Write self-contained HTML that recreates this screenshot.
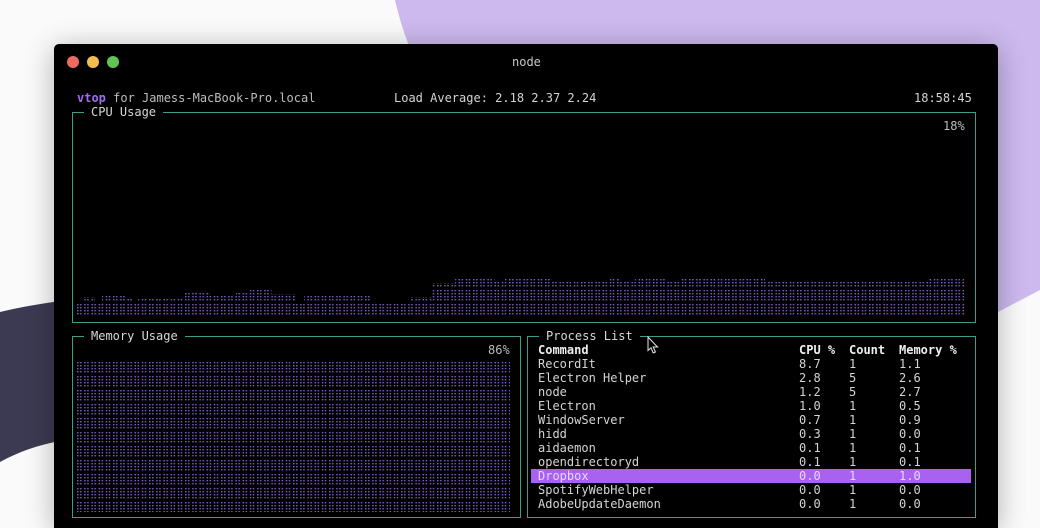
<!DOCTYPE html>
<html><head><meta charset="utf-8"><title>vtop</title>
<style>
html,body{margin:0;padding:0;width:1040px;height:528px;overflow:hidden}
body{position:relative;background:#fafafa;font:12px/14px "DejaVu Sans Mono","Liberation Mono",monospace;color:#d4d4d4}
svg.bg{position:absolute;left:0;top:0}
.clip{position:absolute;left:0;top:0;width:1040px;height:528px;overflow:hidden}
.win{position:absolute;left:54px;top:44px;width:944px;height:484px;background:#000;border-radius:5px 5px 0 0;box-shadow:0 4px 28px rgba(0,0,0,.3)}
.dot{position:absolute;top:56px;width:12px;height:12px;border-radius:50%}
.t{position:absolute;white-space:pre;height:14px;filter:blur(.3px)}
.box{position:absolute;border:1px solid #3f9c8b;box-sizing:border-box}
.lbl{position:absolute;background:#000;white-space:pre;height:14px;padding:0 7px;color:#d8d8d8}
.b{font-weight:bold;color:#eee}
.hl{position:absolute;left:531px;top:469px;width:440px;height:14px;background:#a961ef}
svg.g{position:absolute;left:0;top:0}
</style></head><body>
<div class="clip">
<svg class="bg" width="1040" height="528">
<path d="M395 0C402 30 412 60 440 110L1040 290V0Z" fill="#cdb9ee"/>
<path d="M440 110L600 340L998 312L1040 290V200Z" fill="#cdb9ee"/>
<path d="M0 312C20 307 40 304 60 301V441C38 445 18 452 0 462Z" fill="#3c3a52"/>
</svg>
<div class="win"></div>
<div class="dot" style="left:67px;background:#ee6a5f"></div>
<div class="dot" style="left:87px;background:#f5bd4f"></div>
<div class="dot" style="left:107px;background:#61c454"></div>
<div class="t" style="left:512px;top:55px;color:#c8c8c8">node</div>

<div class="t" style="left:77px;top:91px;color:#bdbdbd"><b style="color:#a56bef">vtop</b> for Jamess-MacBook-Pro.local</div>
<div class="t" style="left:394px;top:91px">Load Average: 2.18 2.37 2.24</div>
<div class="t" style="left:914px;top:91px">18:58:45</div>

<div class="box" style="left:72px;top:112px;width:904px;height:211px"></div>
<div class="lbl" style="left:84px;top:105px">CPU Usage</div>
<div class="t" style="left:943px;top:119px;color:#bbb">18%</div>

<div class="box" style="left:72px;top:336px;width:449px;height:182px"></div>
<div class="lbl" style="left:84px;top:329px">Memory Usage</div>
<div class="t" style="left:488px;top:343px;color:#bbb">86%</div>

<div class="box" style="left:527px;top:336px;width:449px;height:182px"></div>
<div class="lbl" style="left:539px;top:329px">Process List</div>

<svg class="g" width="1040" height="528">
<defs>
<pattern id="c" patternUnits="userSpaceOnUse" x="77" y="304" width="7.2" height="14">
<g fill="#7c5cc4"><rect x="0" y="0" width="1.5" height="1.4"/><rect x="3" y="0" width="1.5" height="1.4"/><rect x="0" y="3" width="1.5" height="1.4"/><rect x="3" y="3" width="1.5" height="1.4"/><rect x="0" y="6" width="1.5" height="1.4"/><rect x="3" y="6" width="1.5" height="1.4"/><rect x="0" y="9" width="1.5" height="1.4"/><rect x="3" y="9" width="1.5" height="1.4"/></g>
</pattern>
<pattern id="m" patternUnits="userSpaceOnUse" x="77" y="362" width="7.2" height="14">
<g fill="#7c5cc4"><rect x="0" y="0" width="1.5" height="1.4"/><rect x="3" y="0" width="1.5" height="1.4"/><rect x="0" y="3" width="1.5" height="1.4"/><rect x="3" y="3" width="1.5" height="1.4"/><rect x="0" y="6" width="1.5" height="1.4"/><rect x="3" y="6" width="1.5" height="1.4"/><rect x="0" y="9" width="1.5" height="1.4"/><rect x="3" y="9" width="1.5" height="1.4"/></g>
</pattern>
</defs>
<path fill="url(#c)" d="M77 317V303H84V297H95V303H102V296H127V299H134V303H138V298H183V293H210V296H236V293H250V290H272V294H296V303H304V296H370V303H410V297H432V283H455V278H495V282H505V278H550V282H610V278H620V282H635V278H665V282H680V278H765V282H928V278H965V317Z"/>
<rect x="77" y="362" width="433" height="150" fill="url(#m)"/>
</svg>

<div class="hl"></div>
<div class="t b" style="left:538px;top:343px">Command</div><div class="t b" style="left:799px;top:343px">CPU %</div><div class="t b" style="left:849px;top:343px">Count</div><div class="t b" style="left:899px;top:343px">Memory %</div>
<div class="t" style="left:538px;top:357px">RecordIt</div><div class="t" style="left:799px;top:357px">8.7</div><div class="t" style="left:849px;top:357px">1</div><div class="t" style="left:899px;top:357px">1.1</div>
<div class="t" style="left:538px;top:371px">Electron Helper</div><div class="t" style="left:799px;top:371px">2.8</div><div class="t" style="left:849px;top:371px">5</div><div class="t" style="left:899px;top:371px">2.6</div>
<div class="t" style="left:538px;top:385px">node</div><div class="t" style="left:799px;top:385px">1.2</div><div class="t" style="left:849px;top:385px">5</div><div class="t" style="left:899px;top:385px">2.7</div>
<div class="t" style="left:538px;top:399px">Electron</div><div class="t" style="left:799px;top:399px">1.0</div><div class="t" style="left:849px;top:399px">1</div><div class="t" style="left:899px;top:399px">0.5</div>
<div class="t" style="left:538px;top:413px">WindowServer</div><div class="t" style="left:799px;top:413px">0.7</div><div class="t" style="left:849px;top:413px">1</div><div class="t" style="left:899px;top:413px">0.9</div>
<div class="t" style="left:538px;top:427px">hidd</div><div class="t" style="left:799px;top:427px">0.3</div><div class="t" style="left:849px;top:427px">1</div><div class="t" style="left:899px;top:427px">0.0</div>
<div class="t" style="left:538px;top:441px">aidaemon</div><div class="t" style="left:799px;top:441px">0.1</div><div class="t" style="left:849px;top:441px">1</div><div class="t" style="left:899px;top:441px">0.1</div>
<div class="t" style="left:538px;top:455px">opendirectoryd</div><div class="t" style="left:799px;top:455px">0.1</div><div class="t" style="left:849px;top:455px">1</div><div class="t" style="left:899px;top:455px">0.1</div>
<div class="t" style="left:538px;top:469px;color:#e8d6ff">Dropbox</div><div class="t" style="left:799px;top:469px;color:#e8d6ff">0.0</div><div class="t" style="left:849px;top:469px;color:#e8d6ff">1</div><div class="t" style="left:899px;top:469px;color:#e8d6ff">1.0</div>
<div class="t" style="left:538px;top:483px">SpotifyWebHelper</div><div class="t" style="left:799px;top:483px">0.0</div><div class="t" style="left:849px;top:483px">1</div><div class="t" style="left:899px;top:483px">0.0</div>
<div class="t" style="left:538px;top:497px">AdobeUpdateDaemon</div><div class="t" style="left:799px;top:497px">0.0</div><div class="t" style="left:849px;top:497px">1</div><div class="t" style="left:899px;top:497px">0.0</div>

<svg class="g" width="1040" height="528">
<path d="M648 337V350.5L651 347.8L653.2 353L655.4 352L653.2 347H657.5Z" fill="#000" stroke="#e8e8e8" stroke-width="1"/>
</svg>
</div>
</body></html>
